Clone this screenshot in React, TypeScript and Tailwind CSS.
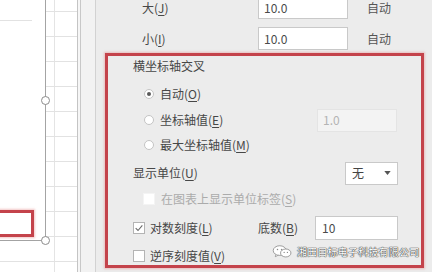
const font = "font-['Microsoft_YaHei','Noto_Sans_CJK_SC',sans-serif]"

// tecla de acceso subrayada, como en los diálogos de Office
function Key({ k }: { k: string }) {
  return (
    <>
      (<span className="underline underline-offset-[2px] decoration-[1px]">{k}</span>)
    </>
  )
}

function Radio({ checked = false }: { checked?: boolean }) {
  return (
    <span className="w-[10px] h-[10px] rounded-full border border-[#c4c4c4] bg-white flex items-center justify-center shrink-0">
      {checked && <span className="w-[4px] h-[4px] rounded-full bg-[#5a5a5a]" />}
    </span>
  )
}

function Check({ checked = false, disabled = false }: { checked?: boolean; disabled?: boolean }) {
  return (
    <span
      className={`w-[12px] h-[12px] bg-white flex items-center justify-center shrink-0 border ${
        disabled ? "border-[#f4f4f4]" : "border-[#b4b4b4]"
      }`}
    >
      {checked && (
        <svg viewBox="0 0 12 12" className="w-[10px] h-[10px]">
          <path d="M2 6.2 L4.8 9 L10 2.8" fill="none" stroke="#6a6a6a" strokeWidth="1.3" />
        </svg>
      )}
    </span>
  )
}

function Sheet() {
  const rows = Array.from({ length: 11 })
  return (
    <div className="relative w-[77px] h-full bg-white shrink-0 overflow-hidden">
      <div className="h-[11px] flex">
        <div className="w-[55px] border-r border-[#e4e4e4]" />
      </div>
      {rows.map((_, i) => (
        <div key={i} className="h-[25px] flex border-t border-[#e2e2e2]">
          <div className="w-[55px] h-full border-r border-[#e4e4e4]" />
        </div>
      ))}

      {/* zona del gráfico */}
      <div className="absolute left-0 top-0 w-[46px] h-[241px] bg-white border-r border-b border-[#a4a4a4]">
        <div className="absolute left-0 top-[20px] w-[32px] h-px bg-[#e2e2e2]" />
        <div className="absolute left-[-3px] top-[210px] w-[37px] h-[27px] border-[3px] border-[#c4434b] shadow-[0_0_2px_1px_rgba(232,150,150,0.55)]" />
      </div>
      <div className="absolute left-[41px] top-[96px] w-[9px] h-[9px] rounded-full border border-[#8c8c8c] bg-white" />
      <div className="absolute left-[41px] top-[236px] w-[9px] h-[9px] rounded-full border border-[#8c8c8c] bg-white" />
    </div>
  )
}

function Watermark() {
  return (
    <div className="absolute left-[272px] top-[245px] flex items-center gap-[4px]">
      <svg viewBox="0 0 22 14" className="w-[21px] h-[13px]">
        <ellipse cx="8" cy="6" rx="7" ry="5.2" fill="#ffffff" stroke="#8a8a8a" strokeWidth="0.9" />
        <path d="M4 10.2 L3.2 12.6 L6.4 11" fill="#ffffff" stroke="#8a8a8a" strokeWidth="0.8" />
        <ellipse cx="14.5" cy="8.6" rx="5.6" ry="4.3" fill="#ffffff" stroke="#8a8a8a" strokeWidth="0.9" />
        <circle cx="5.6" cy="4.8" r="0.8" fill="#8a8a8a" />
        <circle cx="10" cy="4.8" r="0.8" fill="#8a8a8a" />
        <circle cx="12.8" cy="8" r="0.7" fill="#8a8a8a" />
        <circle cx="16.3" cy="8" r="0.7" fill="#8a8a8a" />
      </svg>
      <span className="text-[10px] leading-[12px] text-white tracking-[0.2px] [text-shadow:0_0_1px_#333,0_0_1px_#333,0_0_1px_#555]">
        湘田目标电子科技有限公司
      </span>
    </div>
  )
}

export default function App() {
  return (
    <div className={`relative flex w-[432px] h-[272px] overflow-hidden bg-white text-[12px] text-[#474747] ${font}`}>
      <Sheet />
      <div className="w-px h-full bg-[#c4c4c4]" />
      <div className="w-[2px] h-full bg-[#f6f6f6]" />
      <div className="w-px h-full bg-[#c8c8c8]" />
      <div className="w-[14px] h-full bg-[#f2f2f2]" />
      <div className="w-px h-full bg-[#d2d2d2]" />

      {/* panel de formato del eje */}
      <div className="flex-1 h-full bg-[#ececec] flex flex-col">
        <div className="flex items-center h-[23px] mt-[-4px]">
          <span className="pl-[46px] w-[162px]">大<Key k="J" /></span>
          <div className="w-[90px] h-[23px] bg-white border border-[#c9c9c9] flex items-center pl-[5px] text-[#4a4a4a]">10.0</div>
          <span className="ml-[19px] text-[#555]">自动</span>
        </div>
        <div className="flex items-center h-[23px] mt-[8px]">
          <span className="pl-[46px] w-[162px]">小<Key k="I" /></span>
          <div className="w-[90px] h-[23px] bg-white border border-[#c9c9c9] flex items-center pl-[5px] text-[#4a4a4a]">10.0</div>
          <span className="ml-[19px] text-[#555]">自动</span>
        </div>

        <div className="mt-[3px] ml-[9px] w-[319px] h-[215px] border-[3px] border-[#c4434b] shadow-[0_0_2px_1px_rgba(232,150,150,0.55)] overflow-hidden flex flex-col">
          <div className="h-[20px] flex items-center pl-[25px]">横坐标轴交叉</div>

          <div className="h-[28px] mt-[5px] flex items-center pl-[36px] gap-[6px]">
            <Radio checked />
            <span>自动<Key k="O" /></span>
          </div>
          <div className="h-[26px] flex items-center pl-[36px] gap-[6px]">
            <Radio />
            <span>坐标轴值<Key k="E" /></span>
            <div className="ml-auto mr-[24px] w-[80px] h-[23px] bg-[#f3f3f3] border border-[#e4e4e4] flex items-center pl-[5px] text-[#b4b4b4]">
              1.0
            </div>
          </div>
          <div className="h-[26px] flex items-center pl-[36px] gap-[6px]">
            <Radio />
            <span>最大坐标轴值<Key k="M" /></span>
          </div>

          <div className="h-[32px] flex items-center pl-[25px]">
            <span>显示单位<Key k="U" /></span>
            <div className="ml-auto mr-[23px] w-[53px] h-[23px] bg-white border border-[#c9c9c9] flex items-center justify-between pl-[6px] pr-[6px]">
              <span className="text-[#444]">无</span>
              <svg viewBox="0 0 8 5" className="w-[7px] h-[4px]">
                <path d="M0 0 H8 L4 5 Z" fill="#555" />
              </svg>
            </div>
          </div>

          <div className="h-[20px] flex items-center pl-[35px] gap-[6px]">
            <Check disabled />
            <span className="text-[#ababab]">在图表上显示单位标签<Key k="S" /></span>
          </div>

          <div className="h-[40px] flex items-center pl-[25px] gap-[5px]">
            <Check checked />
            <span>对数刻度<Key k="L" /></span>
            <span className="ml-auto mr-[12px]">底数<Key k="B" /></span>
            <div className="mr-[23px] w-[83px] h-[24px] bg-white border border-[#c9c9c9] flex items-center pl-[6px] text-[#4a4a4a]">10</div>
          </div>

          <div className="h-[18px] shrink-0 flex items-center pl-[25px] gap-[5px]">
            <Check />
            <span>逆序刻度值<Key k="V" /></span>
          </div>
        </div>
      </div>

      <Watermark />
    </div>
  )
}
